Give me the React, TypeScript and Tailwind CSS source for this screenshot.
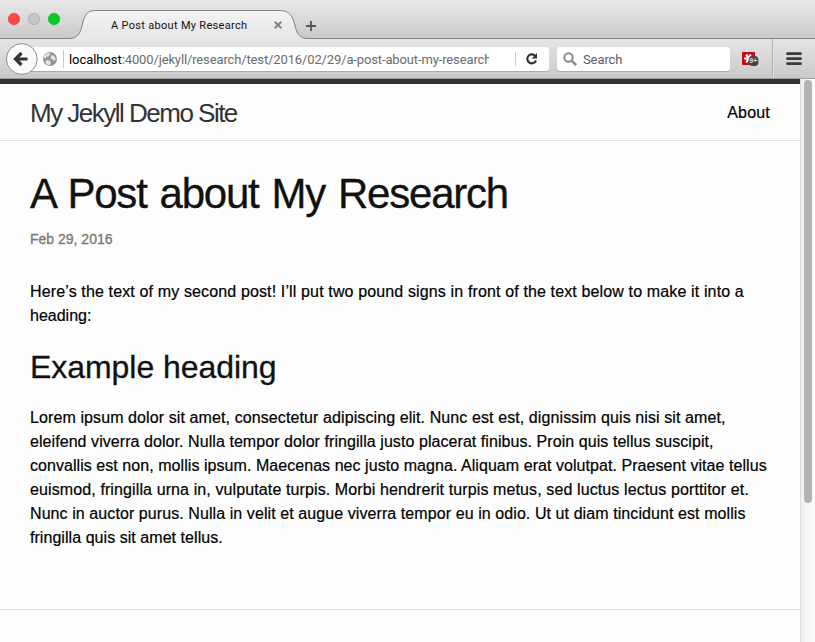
import React from "react";

const bodyLines: { text: string; cls: string }[] = [
  { text: "Lorem ipsum dolor sit amet, consectetur adipiscing elit. Nunc est est, dignissim quis nisi sit amet,", cls: "tracking-[0.1px]" },
  { text: "eleifend viverra dolor. Nulla tempor dolor fringilla justo placerat finibus. Proin quis tellus suscipit,", cls: "tracking-[0.065px]" },
  { text: "convallis est non, mollis ipsum. Maecenas nec justo magna. Aliquam erat volutpat. Praesent vitae tellus", cls: "tracking-[0.055px]" },
  { text: "euismod, fringilla urna in, vulputate turpis. Morbi hendrerit turpis metus, sed luctus lectus porttitor et.", cls: "tracking-[0.112px]" },
  { text: "Nunc in auctor purus. Nulla in velit et augue viverra tempor eu in odio. Ut ut diam tincidunt est mollis", cls: "tracking-[0.082px]" },
  { text: "fringilla quis sit amet tellus.", cls: "tracking-[0.05px]" },
];

function TabStrip() {
  return (
    <div className="relative h-[39px] bg-gradient-to-b from-[#e9e9e9] to-[#c9c9c9]">
      <svg className="absolute inset-0" width="815" height="39" viewBox="0 0 815 39">
        <defs>
          <linearGradient id="tab" x1="0" y1="0" x2="0" y2="1">
            <stop offset="0" stopColor="#f3f3f3" />
            <stop offset="1" stopColor="#e6e6e6" />
          </linearGradient>
        </defs>
        <path d="M69 39C78 38 80 33 82 26C84 17 86 10.5 95 10.5H280C290 10.5 293 17 295 26C297 33 299 38 308 39Z" fill="url(#tab)" />
        <path d="M0 38.5H69C78 38.5 80 33 82 26C84 17 86 10.5 95 10.5H280C290 10.5 293 17 295 26C297 33 299 38.5 308 38.5H815" fill="none" stroke="#858585" />
        <circle cx="14" cy="19" r="5.7" fill="#fc4946" stroke="#e0403c" strokeWidth=".7" />
        <circle cx="34" cy="19" r="5.7" fill="#c5c5c5" stroke="#a9a9a9" strokeWidth=".8" />
        <circle cx="54" cy="19" r="5.7" fill="#08ca24" stroke="#08b51f" strokeWidth=".7" />
        <path d="M274.7 21.7L281.3 28.3M281.3 21.7L274.7 28.3" stroke="#858585" strokeWidth="2.1" />
        <path d="M311 21V31M306 26H316" stroke="#555" strokeWidth="1.8" />
      </svg>
      <div className="relative ml-[111px] pt-[18px] text-[11px] leading-[15px] whitespace-nowrap text-[#111]">
        <span className="tracking-[0.31px]">A Post about My Research</span>
      </div>
    </div>
  );
}

function Toolbar() {
  return (
    <div className="relative flex h-[40px] items-start border-b border-[#a0a0a0] bg-gradient-to-b from-[#e6e6e6] to-[#c9c9c9] pt-[8px]">
      <div className="ml-[24px] flex h-[24px] w-[525px] items-center rounded-r-[3px] bg-white shadow-[0_1px_0_#aaa]">
        <svg className="ml-[18px]" width="16" height="16" viewBox="0 0 16 16">
          <circle cx="8" cy="8" r="7" fill="#969696" />
          <path d="M1.6 6.4C2.4 3.6 4.6 2 7 1.7L8.4 3L6.6 5.2L4.4 6L3.6 7.6ZM9.2 4.8L11 4L12.6 5.6L13.8 8.6L12 10L10.4 8.2L8.6 7.4ZM3 10.4L5.4 9L8 9.8L9 12L7.6 14.2C5.6 14 4 12.8 3 10.4Z" fill="#e4e4e4" />
        </svg>
        <div className="ml-[5px] h-[18px] w-px bg-[#c8c8c8]" />
        <div className="ml-[5px] w-[420px] overflow-hidden pt-[1px] text-[13px] leading-[18px] whitespace-nowrap text-[#6b6b6b]">
          <span className="tracking-[-0.13px]"><span className="tracking-[-0.05px] text-black">localhost</span>:4000/jekyll/research/test/2016/02/29/a-post-about-my-research</span>
        </div>
        <div className="ml-[26px] h-[14px] w-px bg-[#ccc]" />
        <svg className="ml-[9px]" width="14" height="14" viewBox="0 0 14 14">
          <path d="M10.1 3.8A4.5 4.5 0 1 0 11 8.5" fill="none" stroke="#333" strokeWidth="2.1" />
          <path d="M12 1V6.5H6.7Z" fill="#333" />
        </svg>
      </div>
      <div className="ml-[8px] flex h-[24px] w-[173px] items-center rounded-[3px] bg-white shadow-[0_1px_0_#aaa]">
        <svg className="ml-[6px]" width="15" height="15" viewBox="0 0 15 15" fill="none" stroke="#8a8a8a">
          <circle cx="5.5" cy="5.5" r="4.2" strokeWidth="2" />
          <path d="M8.8 8.8L13.2 13.2" strokeWidth="2.6" />
        </svg>
        <span className="ml-[5px] pt-[1px] text-[13px] leading-[18px] tracking-[-0.1px] text-[#5c5c5c]">Search</span>
      </div>
      <svg className="absolute top-0 left-0" width="815" height="39" viewBox="0 39 815 39">
        <circle cx="21.8" cy="59" r="15.4" fill="#fafafa" stroke="#8c8c8c" />
        <path d="M27.5 59H17M21.5 53L15.5 59L21.5 65" fill="none" stroke="#333" strokeWidth="3.2" />
        <rect x="742" y="52" width="13" height="13" rx="1" fill="#c70c10" />
        <path d="M744 58.5H753M746.3 54.5L750.7 62.5M750.7 54.5L746.3 62.5" stroke="#fff" strokeWidth="2.2" />
        <rect x="748.6" y="56" width="9.8" height="10" rx="3.8" fill="#444" />
        <text x="749.3" y="63.4" fontSize="7" fontWeight="700" fill="#ddd" fontFamily="Liberation Sans, sans-serif">9+</text>
        <path d="M772.5 39V78" stroke="#b2b2b2" />
        <path d="M773.5 39V78" stroke="#e2e2e2" />
        <path d="M787.5 53.7H800.5M787.5 58.7H800.5M787.5 63.7H800.5" stroke="#3b3b3b" strokeWidth="2.8" strokeLinecap="round" />
      </svg>
    </div>
  );
}

export default function App() {
  return (
    <div className="h-[642px] w-[815px] overflow-hidden bg-[#fdfdfd] font-[Roboto,sans-serif]">
      <TabStrip />
      <Toolbar />
      <div className="flex h-[563px] font-['Liberation_Sans',Arial,sans-serif]">
        <div className="w-[800px] border-t-[5px] border-[#333] text-[#111]">
          <header className="flex h-[57px] justify-between border-b border-[#e1e1e1] pr-[30px] pl-[30px] leading-[58px] whitespace-nowrap">
            <span className="text-[26px] tracking-[-1.51px] text-[#333]">My Jekyll Demo Site</span>
            <span className="text-[16px] tracking-[0.2px] text-black [-webkit-text-stroke:0.2px]">About</span>
          </header>
          <article className="px-[30px] pt-[30px] text-[16px] leading-[24px] whitespace-nowrap text-black">
            <h1 className="text-[42px] leading-[45px] tracking-[-1.22px] text-[#111] [-webkit-text-stroke:0.3px] [word-spacing:2.5px]">A Post about My Research</h1>
            <p className="pt-[11px] text-[14px] leading-[24px] text-[#777] [-webkit-text-stroke:0.3px]">Feb 29, 2016</p>
            <div className="mt-[29px] [-webkit-text-stroke:0.2px]">
              <div className="tracking-[0.137px]">Here’s the text of my second post! I’ll put two pound signs in front of the text below to make it into a</div>
              <div>heading:</div>
            </div>
            <h2 className="mt-[15px] text-[32px] leading-[48px] tracking-[-0.05px] text-[#111] [-webkit-text-stroke:0.3px]">Example heading</h2>
            <div className="mt-[15px] [-webkit-text-stroke:0.2px]">
              {bodyLines.map((l) => (
                <div key={l.text}><span className={l.cls}>{l.text}</span></div>
              ))}
            </div>
          </article>
          <div className="mt-[59px] border-t border-[#e1e1e1]" />
        </div>
        <div className="w-[15px] border-l border-[#dcdcdc] bg-gradient-to-r from-[#f0f0f0] to-[#fcfcfc]">
          <div className="mt-[1px] ml-[3px] h-[423px] w-[8px] rounded-full bg-[#b3b3b3]" />
        </div>
      </div>
    </div>
  );
}
